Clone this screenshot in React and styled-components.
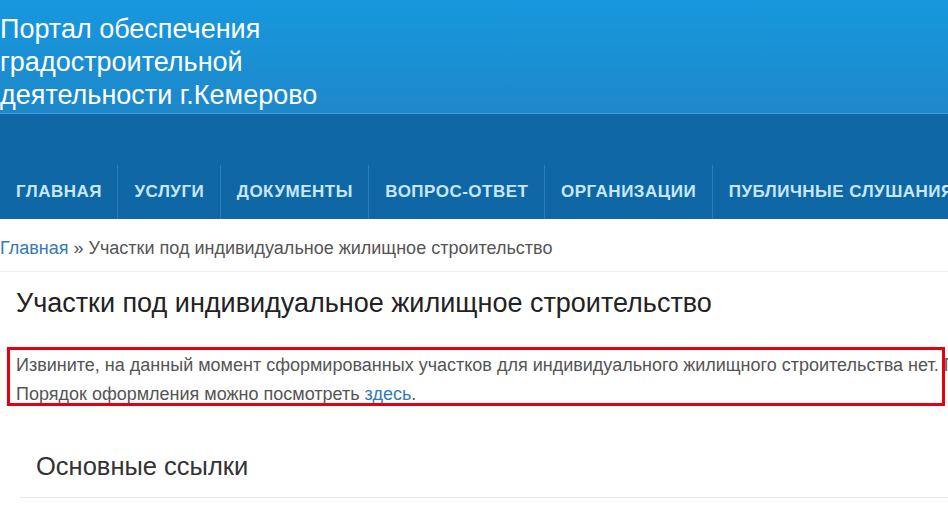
import React from "react";
import styled, { createGlobalStyle } from "styled-components";

const Global = createGlobalStyle`
  html, body { margin: 0; padding: 0; background: #fff; overflow: hidden; }
  body { font-family: "Liberation Sans", Arial, sans-serif; }
  #root { width: 948px; overflow: hidden; }
`;

const Page = styled.div`
  position: relative;
  width: 948px;
  min-height: 505px;
`;

const Header = styled.header`
  background: linear-gradient(to bottom, #1798de 0%, #1d88ca 100%);
  border-bottom: 1px solid #3ca2e0;
  padding: 13px 0 0 0;
  height: 100px;
`;

const SiteTitle = styled.div`
  color: #fff;
  font-size: 27px;
  line-height: 33px;
  width: 340px;
`;

const Nav = styled.nav`
  background: #0f67a5;
  height: 105px;
  display: flex;
  align-items: flex-end;
  white-space: nowrap;
`;

const NavItem = styled.a`
  display: block;
  height: 54px;
  line-height: 54px;
  padding: 0 15.5px 0 16px;
  color: #c7e7fc;
  font-weight: bold;
  font-size: 17px;
  letter-spacing: 0.5px;
  text-transform: uppercase;
  border-left: ${(p) => (p.$first ? "none" : "1px solid #2c7db9")};
  flex-shrink: 0;
`;

const Breadcrumbs = styled.div`
  padding: 17px 0 11px;
  font-size: 18px;
  line-height: 24px;
  color: #555;
  border-bottom: 1px solid #eee;
  white-space: nowrap;
`;

const Link = styled.a`
  color: #337ab7;
  text-decoration: none;
`;

const Title = styled.h1`
  margin: 15px 0 0;
  padding-left: 16px;
  font-weight: normal;
  font-size: 27px;
  line-height: 32px;
  color: #222;
  white-space: nowrap;
`;

const Notice = styled.div`
  margin-top: 32px;
  padding-left: 16px;
  font-size: 18px;
  line-height: 29px;
  color: #555;
`;

const Line = styled.div`
  white-space: nowrap;
`;

const Highlight = styled.div`
  position: absolute;
  left: 7px;
  top: 347px;
  width: 932px;
  height: 53px;
  border: 3px solid #e3000f;
  pointer-events: none;
`;

const Panel = styled.section`
  margin: 42px 0 0 20px;
  border-bottom: 1px solid #e8e8e8;
`;

const PanelTitle = styled.h3`
  margin: 0;
  padding: 0 0 16px 16px;
  font-weight: normal;
  font-size: 25.5px;
  line-height: 30px;
  color: #333;
`;

const navItems = [
  "Главная",
  "Услуги",
  "Документы",
  "Вопрос-ответ",
  "Организации",
  "Публичные слушания",
];

export default function App() {
  return (
    <Page>
      <Global />
      <Header>
        <SiteTitle>Портал обеспечения градостроительной деятельности г.Кемерово</SiteTitle>
      </Header>
      <Nav>
        {navItems.map((t, i) => (
          <NavItem key={t} $first={i === 0}>
            {t}
          </NavItem>
        ))}
      </Nav>
      <Breadcrumbs>
        <Link>Главная</Link> » Участки под индивидуальное жилищное строительство
      </Breadcrumbs>
      <Title>Участки под индивидуальное жилищное строительство</Title>
      <Notice>
        <Line>
          Извините, на данный момент сформированных участков для индивидуального жилищного строительства нет. По вопросам обращайтесь
        </Line>
        <Line>
          Порядок оформления можно посмотреть <Link>здесь</Link>.
        </Line>
      </Notice>
      <Highlight />
      <Panel>
        <PanelTitle>Основные ссылки</PanelTitle>
      </Panel>
    </Page>
  );
}
